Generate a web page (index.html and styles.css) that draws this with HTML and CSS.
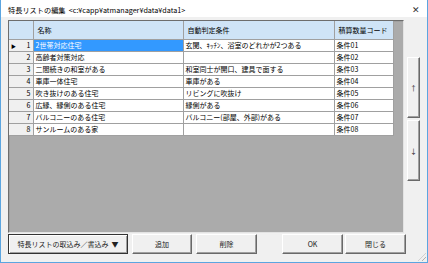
FILE: index.html
```html
<!DOCTYPE html>
<html lang="ja">
<head>
  <meta charset="UTF-8">
  <title>特長リストの編集</title>
  <link rel="stylesheet" href="styles.css">
</head>
<body>
  <div class="window">
    <div class="titlebar">
      <span class="title">特長リストの編集&nbsp;&nbsp;&lt;c:¥capp¥atmanager¥data¥data1&gt;</span>
      <span class="close">✕</span>
    </div>
    <div class="content">
      <div class="grid">
        <table>
          <colgroup>
            <col class="col-head">
            <col class="col-name">
            <col class="col-cond">
            <col class="col-code">
          </colgroup>
          <thead>
            <tr>
              <th class="rowhead"></th>
              <th>名称</th>
              <th>自動判定条件</th>
              <th>積算数量コード</th>
            </tr>
          </thead>
          <tbody>
            <tr>
              <td class="rowhead"><span class="arrow">▶</span>1</td>
              <td class="selected">2世帯対応住宅</td>
              <td>玄関、ｷｯﾁﾝ、浴室のどれかが2つある</td>
              <td>条件01</td>
            </tr>
            <tr>
              <td class="rowhead">2</td>
              <td>高齢者対策対応</td>
              <td></td>
              <td>条件02</td>
            </tr>
            <tr>
              <td class="rowhead">3</td>
              <td>二間続きの和室がある</td>
              <td>和室同士が開口、建具で面する</td>
              <td>条件03</td>
            </tr>
            <tr>
              <td class="rowhead">4</td>
              <td>車庫一体住宅</td>
              <td>車庫がある</td>
              <td>条件04</td>
            </tr>
            <tr>
              <td class="rowhead">5</td>
              <td>吹き抜けのある住宅</td>
              <td>リビングに吹抜け</td>
              <td>条件05</td>
            </tr>
            <tr>
              <td class="rowhead">6</td>
              <td>広縁、縁側のある住宅</td>
              <td>縁側がある</td>
              <td>条件06</td>
            </tr>
            <tr>
              <td class="rowhead">7</td>
              <td>バルコニーのある住宅</td>
              <td>バルコニー(部屋、外部)がある</td>
              <td>条件07</td>
            </tr>
            <tr>
              <td class="rowhead">8</td>
              <td>サンルームのある家</td>
              <td></td>
              <td>条件08</td>
            </tr>
          </tbody>
        </table>
      </div>
      <div class="side">
        <button class="move up">↑</button>
        <button class="move down">↓</button>
      </div>
    </div>
    <div class="actions">
      <button class="btn btn-io">特長リストの取込み／書込み&nbsp;&nbsp;▼</button>
      <button class="btn btn-add">追加</button>
      <button class="btn btn-del">削除</button>
      <button class="btn btn-ok">OK</button>
      <button class="btn btn-close">閉じる</button>
    </div>
    <div class="grip"></div>
  </div>
</body>
</html>
```

FILE: styles.css
```css
html, body {
  margin: 0;
  padding: 0;
}
body {
  font-family: "Noto Sans CJK JP", "Noto Sans", sans-serif;
  font-size: 7px;
  color: #000;
}
.window {
  position: relative;
  box-sizing: border-box;
  width: 428px;
  height: 263px;
  border: 1px solid #5ba5e0;
  border-top: none;
  background-color: #f0f0f0;
  display: flex;
  flex-direction: column;
}
.titlebar {
  height: 17px;
  background-color: #fff;
  display: flex;
  align-items: center;
  justify-content: space-between;
  padding: 2px 7px 0 7px;
  box-sizing: border-box;
}
.title {
  font-size: 7.2px;
}
.close {
  font-size: 9px;
  color: #333;
}
.content {
  display: flex;
  padding: 3px 0 0 7px;
  height: 213px;
  box-sizing: border-box;
}
.grid {
  width: 396px;
  height: 213px;
  box-sizing: border-box;
  background-color: #ababab;
  border: 1px solid;
  border-color: #6d6d6d #e3e3e3 #e3e3e3 #6d6d6d;
  box-shadow: inset 1px 1px 0 #a0a0a0;
  overflow: hidden;
}
table {
  border-collapse: collapse;
  table-layout: fixed;
  width: 384px;
}
.col-head {
  width: 24px;
}
.col-name {
  width: 150px;
}
.col-cond {
  width: 151px;
}
.col-code {
  width: 59px;
}
th, td {
  height: 11px;
  padding: 0 2px;
  border: 1px solid #a0a0a0;
  text-align: left;
  font-weight: normal;
  white-space: nowrap;
  overflow: hidden;
  line-height: 11px;
  background-color: #fff;
}
th {
  height: 18px;
  background-color: #cfe4f7;
  border-top: none;
  padding-left: 4px;
}
.rowhead {
  text-align: right;
  background-color: #f0f0f0;
  border-left: none;
  position: relative;
  padding-right: 2px;
}
th.rowhead {
  background-color: #cfe4f7;
}
td.selected {
  background-color: #3399ff;
  color: #fff;
}
.arrow {
  position: absolute;
  left: 2px;
  top: 0;
  font-size: 5px;
}
.side {
  width: 20px;
  display: flex;
  flex-direction: column;
  padding: 37px 0 0 3px;
  gap: 2px;
  box-sizing: border-box;
}
.move {
  width: 13px;
  height: 61px;
  padding: 0;
  margin: 0;
  background-color: #f0f0f0;
  border: 1px solid;
  border-color: #fff #696969 #696969 #fff;
  box-shadow: inset -1px -1px 0 #a0a0a0;
  font-family: inherit;
  font-size: 7px;
  color: #222;
}
.actions {
  display: flex;
  padding: 4px 0 0 7px;
}
.btn {
  height: 20px;
  padding: 0;
  margin: 0 4px 0 0;
  background-color: #f0f0f0;
  border: 1px solid;
  border-color: #fff #696969 #696969 #fff;
  box-shadow: inset -1px -1px 0 #a0a0a0;
  font-family: inherit;
  font-size: 7px;
  color: #222;
}
.btn-io {
  width: 120px;
  border-color: #333;
  box-shadow: inset 1px 1px 0 #fff, inset -1px -1px 0 #a0a0a0;
}
.btn-add {
  width: 60px;
}
.btn-del {
  width: 61px;
  margin-right: 25px;
}
.btn-ok {
  width: 61px;
  margin-right: 2px;
}
.btn-close {
  width: 61px;
}
.grip {
  position: absolute;
  right: 1px;
  bottom: 1px;
  width: 8px;
  height: 8px;
  background: repeating-linear-gradient(135deg, transparent 0 2px, #b0b0b0 2px 3px);
  clip-path: polygon(100% 0, 100% 100%, 0 100%);
}
```
